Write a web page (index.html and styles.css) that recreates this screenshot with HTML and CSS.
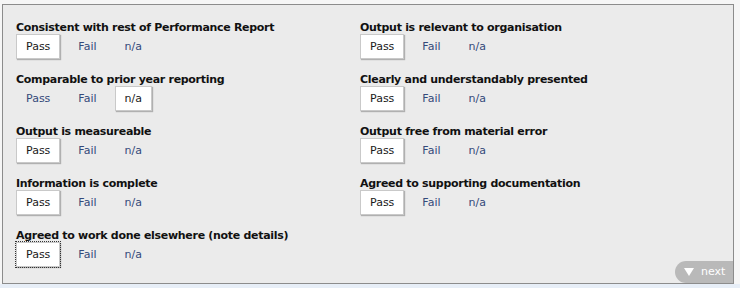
FILE: index.html
```html
<!DOCTYPE html>
<html lang="en">
<head>
  <meta charset="UTF-8">
  <title>Output Review</title>
  <link rel="stylesheet" href="styles.css">
</head>
<body>
  <div class="panel">
    <div class="grid">
      <div class="item">
        <div class="label">Consistent with rest of Performance Report</div>
        <div class="choices">
          <button class="opt selected">Pass</button>
          <button class="opt">Fail</button>
          <button class="opt">n/a</button>
        </div>
      </div>
      <div class="item">
        <div class="label">Output is relevant to organisation</div>
        <div class="choices">
          <button class="opt selected">Pass</button>
          <button class="opt">Fail</button>
          <button class="opt">n/a</button>
        </div>
      </div>
      <div class="item">
        <div class="label">Comparable to prior year reporting</div>
        <div class="choices">
          <button class="opt">Pass</button>
          <button class="opt">Fail</button>
          <button class="opt selected">n/a</button>
        </div>
      </div>
      <div class="item">
        <div class="label">Clearly and understandably presented</div>
        <div class="choices">
          <button class="opt selected">Pass</button>
          <button class="opt">Fail</button>
          <button class="opt">n/a</button>
        </div>
      </div>
      <div class="item">
        <div class="label">Output is measureable</div>
        <div class="choices">
          <button class="opt selected">Pass</button>
          <button class="opt">Fail</button>
          <button class="opt">n/a</button>
        </div>
      </div>
      <div class="item">
        <div class="label">Output free from material error</div>
        <div class="choices">
          <button class="opt selected">Pass</button>
          <button class="opt">Fail</button>
          <button class="opt">n/a</button>
        </div>
      </div>
      <div class="item">
        <div class="label">Information is complete</div>
        <div class="choices">
          <button class="opt selected">Pass</button>
          <button class="opt">Fail</button>
          <button class="opt">n/a</button>
        </div>
      </div>
      <div class="item">
        <div class="label">Agreed to supporting documentation</div>
        <div class="choices">
          <button class="opt selected">Pass</button>
          <button class="opt">Fail</button>
          <button class="opt">n/a</button>
        </div>
      </div>
      <div class="item">
        <div class="label">Agreed to work done elsewhere (note details)</div>
        <div class="choices">
          <button class="opt selected focused">Pass</button>
          <button class="opt">Fail</button>
          <button class="opt">n/a</button>
        </div>
      </div>
    </div>
    <div class="next"><span class="arrow"></span>next</div>
  </div>
  <div class="strip"></div>
</body>
</html>
```

FILE: styles.css
```css
body {
  margin: 0;
  padding: 4px 0 0 0;
  background: #f6f6f6;
  font-family: 'DejaVu Sans', Verdana, sans-serif;
  width: 740px;
  height: 288px;
  overflow: hidden;
}

.panel {
  position: relative;
  margin-left: 2px;
  width: 732px;
  height: 280px;
  background: #ebebeb;
  border: 1px solid #8c8c8c;
  box-sizing: border-box;
  padding: 16px 0 0 13px;
}

.grid {
  display: grid;
  grid-template-columns: 344px 344px;
}

.item {
  height: 52px;
}

.label {
  font-size: 11px;
  font-weight: bold;
  letter-spacing: -0.3px;
  color: #111;
  line-height: 13px;
  white-space: nowrap;
}

.choices {
  display: flex;
  gap: 8px;
}

.opt {
  height: 25px;
  padding: 0 9px;
  border: 1px solid transparent;
  background: none;
  font-family: inherit;
  font-size: 11px;
  color: #34497a;
  cursor: pointer;
}

.opt.selected {
  background: #fff;
  border-color: #c9c9c9;
  box-shadow: 1px 1px 1px rgba(0,0,0,0.25);
  color: #1a1a1a;
}

.opt.focused {
  outline: 1px dotted #333;
  outline-offset: 0;
}

.next {
  position: absolute;
  right: 0;
  bottom: 0;
  width: 58px;
  height: 22px;
  background: #b9b9b9;
  border-radius: 11px 0 0 11px;
  color: #fff;
  font-size: 11px;
  line-height: 22px;
  box-sizing: border-box;
  padding-left: 9px;
}

.arrow {
  display: inline-block;
  width: 0;
  height: 0;
  border-left: 5px solid transparent;
  border-right: 5px solid transparent;
  border-top: 8px solid #fff;
  margin-right: 7px;
  vertical-align: -1px;
}

.strip {
  height: 6px;
  background: #e7eef7;
}
```
